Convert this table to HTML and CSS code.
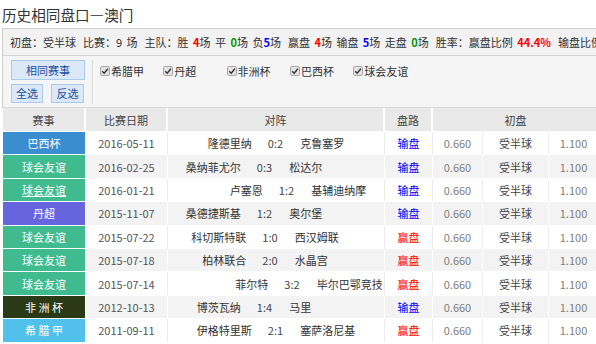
FILE: index.html
```html
<!DOCTYPE html>
<html lang="zh-CN">
<head>
<meta charset="utf-8">
<title>历史相同盘口—澳门</title>
<link rel="stylesheet" href="styles.css">
</head>
<body>
<h1 class="title">历史相同盘口—澳门</h1>
<div class="panel">
  <div class="stats">
    <span class="grp">初盘：受半球</span><span class="grp">比赛：9 场</span><span class="grp">主队：胜 <b class="r">4</b>场 平 <b class="g">0</b>场 负<b class="b">5</b>场</span><span class="grp">赢盘 <b class="r">4</b>场 输盘 <b class="b">5</b>场 走盘 <b class="g">0</b>场</span><span class="grp">胜率：赢盘比例 <b class="r">44.4%</b></span><span class="grp">输盘比例</span>
  </div>
  <div class="filter">
    <div class="btns">
      <button class="btn btn-wide" type="button">相同赛事</button>
      <div class="btn-row">
        <button class="btn btn-sm" type="button">全选</button>
        <button class="btn btn-sm" type="button">反选</button>
      </div>
    </div>
    <div class="sep"></div>
    <div class="checks">
      <label class="chk"><svg class="box" viewBox="0 0 10 10" width="10" height="10"><rect x="0.5" y="0.5" width="9" height="9" rx="1.5" fill="#e4e4e4" stroke="#a8a8a8"/><path d="M2.2 5.2 L4.2 7.2 L7.9 2.8" fill="none" stroke="#333" stroke-width="1.4"/></svg>希腊甲</label>
      <label class="chk"><svg class="box" viewBox="0 0 10 10" width="10" height="10"><rect x="0.5" y="0.5" width="9" height="9" rx="1.5" fill="#e4e4e4" stroke="#a8a8a8"/><path d="M2.2 5.2 L4.2 7.2 L7.9 2.8" fill="none" stroke="#333" stroke-width="1.4"/></svg>丹超</label>
      <label class="chk"><svg class="box" viewBox="0 0 10 10" width="10" height="10"><rect x="0.5" y="0.5" width="9" height="9" rx="1.5" fill="#e4e4e4" stroke="#a8a8a8"/><path d="M2.2 5.2 L4.2 7.2 L7.9 2.8" fill="none" stroke="#333" stroke-width="1.4"/></svg>非洲杯</label>
      <label class="chk"><svg class="box" viewBox="0 0 10 10" width="10" height="10"><rect x="0.5" y="0.5" width="9" height="9" rx="1.5" fill="#e4e4e4" stroke="#a8a8a8"/><path d="M2.2 5.2 L4.2 7.2 L7.9 2.8" fill="none" stroke="#333" stroke-width="1.4"/></svg>巴西杯</label>
      <label class="chk"><svg class="box" viewBox="0 0 10 10" width="10" height="10"><rect x="0.5" y="0.5" width="9" height="9" rx="1.5" fill="#e4e4e4" stroke="#a8a8a8"/><path d="M2.2 5.2 L4.2 7.2 L7.9 2.8" fill="none" stroke="#333" stroke-width="1.4"/></svg>球会友谊</label>
    </div>
  </div>
</div>
<table class="hist">
  <colgroup>
    <col class="c-lg"><col class="c-date"><col class="c-vs"><col class="c-res"><col class="c-o1"><col class="c-hcp"><col class="c-o2">
  </colgroup>
  <thead>
    <tr><th>赛事</th><th>比赛日期</th><th>对阵</th><th>盘路</th><th colspan="3" class="last">初盘</th></tr>
  </thead>
  <tbody>
    <tr><td class="lg lg-bx">巴西杯</td><td class="date">2016-05-11</td><td class="vs"><span class="m" style="--d:0"><span>隆德里纳</span><span class="sc">0:2</span><span>克鲁塞罗</span></span></td><td class="lose">输盘</td><td class="odd">0.660</td><td class="hcp">受半球</td><td class="odd">1.100</td></tr>
    <tr><td class="lg lg-fr">球会友谊</td><td class="date">2016-02-25</td><td class="vs"><span class="m" style="--d:-2"><span>桑纳菲尤尔</span><span class="sc">0:3</span><span>松达尔</span></span></td><td class="lose">输盘</td><td class="odd">0.660</td><td class="hcp">受半球</td><td class="odd">1.100</td></tr>
    <tr><td class="lg lg-fr"><span class="ul">球会友谊</span></td><td class="date">2016-01-21</td><td class="vs"><span class="m" style="--d:2"><span>卢塞恩</span><span class="sc">1:2</span><span>基辅迪纳摩</span></span></td><td class="lose">输盘</td><td class="odd">0.660</td><td class="hcp">受半球</td><td class="odd">1.100</td></tr>
    <tr><td class="lg lg-dk">丹超</td><td class="date">2015-11-07</td><td class="vs"><span class="m" style="--d:-2"><span>桑德捷斯基</span><span class="sc">1:2</span><span>奥尔堡</span></span></td><td class="lose">输盘</td><td class="odd">0.660</td><td class="hcp">受半球</td><td class="odd">1.100</td></tr>
    <tr><td class="lg lg-fr">球会友谊</td><td class="date">2015-07-22</td><td class="vs"><span class="m" style="--d:-1"><span>科切斯特联</span><span class="sc">1:0</span><span>西汉姆联</span></span></td><td class="win">赢盘</td><td class="odd">0.660</td><td class="hcp">受半球</td><td class="odd">1.100</td></tr>
    <tr><td class="lg lg-fr">球会友谊</td><td class="date">2015-07-18</td><td class="vs"><span class="m" style="--d:-1"><span>柏林联合</span><span class="sc">2:0</span><span>水晶宫</span></span></td><td class="win">赢盘</td><td class="odd">0.660</td><td class="hcp">受半球</td><td class="odd">1.100</td></tr>
    <tr><td class="lg lg-fr">球会友谊</td><td class="date">2015-07-14</td><td class="vs"><span class="m" style="--d:3"><span>菲尔特</span><span class="sc">3:2</span><span>毕尔巴鄂竞技</span></span></td><td class="win">赢盘</td><td class="odd">0.660</td><td class="hcp">受半球</td><td class="odd">1.100</td></tr>
    <tr><td class="lg lg-af">非 洲 杯</td><td class="date">2012-10-13</td><td class="vs"><span class="m" style="--d:-2"><span>博茨瓦纳</span><span class="sc">1:4</span><span>马里</span></span></td><td class="lose">输盘</td><td class="odd">0.660</td><td class="hcp">受半球</td><td class="odd">1.100</td></tr>
    <tr><td class="lg lg-gr">希 腊 甲</td><td class="date">2011-09-11</td><td class="vs"><span class="m" style="--d:0"><span>伊格特里斯</span><span class="sc">2:1</span><span>塞萨洛尼基</span></span></td><td class="win">赢盘</td><td class="odd">0.660</td><td class="hcp">受半球</td><td class="odd">1.100</td></tr>
  </tbody>
</table>
</body>
</html>
```

FILE: styles.css
```css
html, body {
  margin: 0;
  padding: 0;
  overflow: hidden;
  background: #fff;
}
body {
  width: 596px;
  height: 344px;
  font-family: "Noto Sans CJK SC", "Microsoft YaHei", sans-serif;
  font-size: 11px;
  color: #333;
}
.title {
  margin: 0;
  height: 28px;
  padding-left: 2px;
  line-height: 30px;
  font-size: 14.6px;
  font-weight: normal;
  color: #333;
  white-space: nowrap;
}
.panel {
  width: 720px;
  margin-left: 2px;
  border-top: 1px solid #cdcdcd;
  border-left: 1px solid #cdcdcd;
  background: #f5f5f5;
}
.stats {
  height: 26px;
  line-height: 26px;
  padding-left: 7px;
  border-bottom: 1px solid #d4d4d4;
  background: #f2f2f2;
  white-space: nowrap;
  color: #333;
  word-spacing: 2px;
}
.grp { margin-right: 7px; }
.stats b { font-weight: bold; }
.r { color: #f00; }
.g { color: #090; }
.b { color: #00f; }

.filter {
  display: flex;
  align-items: flex-start;
  height: 47px;
  padding: 4px 0 0 8px;
  border-bottom: 1px solid #d8d8d8;
}
.btns {
  display: flex;
  flex-direction: column;
  width: 74px;
}
.btn {
  margin: 0;
  padding: 0;
  font-family: inherit;
  font-size: 11px;
  color: #1d4f9c;
  background: #dbe8f8;
  border: 1px solid #a9cbee;
  border-radius: 0;
  line-height: 1;
}
.btn-wide { width: 74px; height: 20px; }
.btn-row {
  display: flex;
  gap: 8px;
  margin-top: 4px;
}
.btn-sm { width: 32px; height: 19px; }
.btn-sm + .btn-sm { width: 33px; }
.sep {
  width: 1px;
  height: 44px;
  margin-left: 7px;
  background: #d6d6d6;
  box-shadow: 1px 0 0 #fff;
}
.checks {
  display: flex;
  padding-left: 7px;
  height: 22px;
  line-height: 22px;
}
.chk {
  display: flex;
  align-items: center;
  width: 63.3px;
  white-space: nowrap;
  color: #333;
}
.box { margin-right: 1px; flex: none; }

.hist {
  margin-left: 3px;
  width: 595px;
  table-layout: fixed;
  border-collapse: separate;
  border-spacing: 0;
}
.c-lg { width: 83px; }
.c-date { width: 82px; }
.c-vs { width: 217px; }
.c-res { width: 48px; }
.c-o1 { width: 50px; }
.c-hcp { width: 66px; }
.c-o2 { width: 49px; }

.hist th {
  height: 23px;
  padding: 0;
  background: #e9e9e9;
  border-right: 2px solid #fff;
  border-bottom: 1px solid #fff;
  font-weight: normal;
  color: #444;
  text-align: center;
}
.hist th.last { border-right: 0; }
.hist td {
  height: 22.4px;
  padding: 0;
  text-align: center;
  white-space: nowrap;
  overflow: hidden;
  border-right: 1px solid #ececec;
  border-bottom: 1px solid #fff;
  background: #fff;
}
.hist tbody tr:nth-child(even) td {
  background: #f3f3f3;
  border-right-color: #fff;
}
.hist td:last-child { border-right: 0; }

.hist td.lg {
  color: #fff;
  border-right: 1px solid #fff;
}
.hist tbody tr td.lg-bx { background: #3a8ed0; }
.hist tbody tr td.lg-fr { background: #3fbb8f; }
.hist tbody tr td.lg-dk { background: #6765de; }
.hist tbody tr td.lg-af { background: #2a3a16; }
.hist tbody tr td.lg-gr { background: #4fc1ea; }
.ul { text-decoration: underline; }

.date { color: #555; }
.vs { color: #333; }
.m {
  display: inline-block;
  margin-left: calc(var(--d) * 2em);
}
.sc { margin: 0 17px 0 16px; color: #444; }
.lose { color: #00f; }
.win { color: #f00; }
.odd { color: #808080; }
.hcp { color: #444; }
```
